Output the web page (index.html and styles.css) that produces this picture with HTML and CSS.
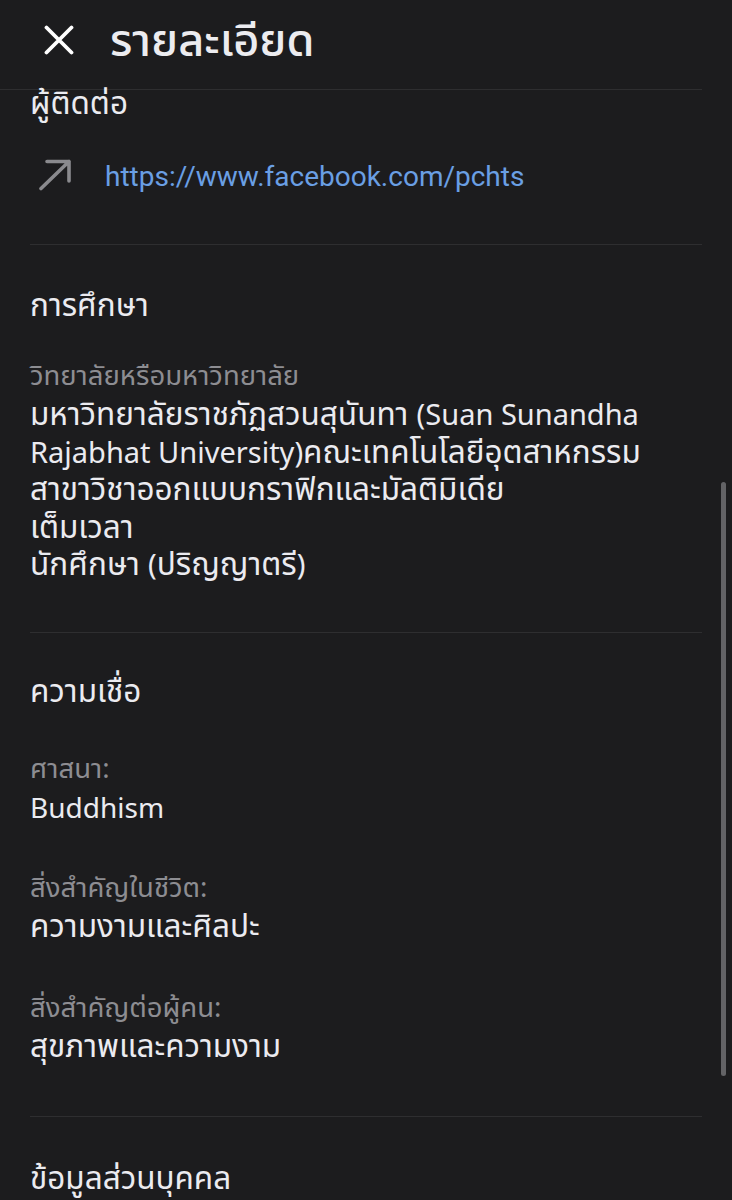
FILE: index.html
```html
<!DOCTYPE html>
<html lang="th">
<head>
<meta charset="utf-8">
<link rel="stylesheet" href="styles.css">
</head>
<body>
<div class="screen">
  <header class="topbar">
    <svg class="close" viewBox="0 0 30 30" width="30" height="30"><path d="M2.5 2.5 L27.5 27.5 M27.5 2.5 L2.5 27.5" stroke="#ffffff" stroke-width="3.8" stroke-linecap="round" fill="none"/></svg>
    <h1 class="title">รายละเอียด</h1>
  </header>
  <main class="content">
    <section class="sec sec-contact">
      <h2 class="sec-title">ผู้ติดต่อ</h2>
      <div class="link-row">
        <svg class="arrow" viewBox="0 0 34 32" width="34" height="32"><path d="M3 29.5 L31 2.5 M9 2.5 L31 2.5 L31 22" stroke="#8a8a8e" stroke-width="3.6" stroke-linecap="round" stroke-linejoin="round" fill="none"/></svg>
        <span class="link">https://www.facebook.com/pchts</span>
      </div>
    </section>
    <section class="sec sec-edu">
      <h2 class="sec-title">การศึกษา</h2>
      <div class="field field-first">
        <div class="label">วิทยาลัยหรือมหาวิทยาลัย</div>
        <div class="value">มหาวิทยาลัยราชภัฏสวนสุนันทา <span class="latin">(Suan Sunandha</span><br><span class="latin">Rajabhat University)</span>คณะเทคโนโลยีอุตสาหกรรม<br>สาขาวิชาออกแบบกราฟิกและมัลติมิเดีย<br>เต็มเวลา<br>นักศึกษา <span class="latin">(</span>ปริญญาตรี<span class="latin">)</span></div>
      </div>
    </section>
    <section class="sec sec-belief">
      <h2 class="sec-title">ความเชื่อ</h2>
      <div class="field field-first">
        <div class="label">ศาสนา:</div>
        <div class="value"><span class="latin latin-word">Buddhism</span></div>
      </div>
      <div class="field">
        <div class="label">สิ่งสำคัญในชีวิต:</div>
        <div class="value">ความงามและศิลปะ</div>
      </div>
      <div class="field">
        <div class="label">สิ่งสำคัญต่อผู้คน:</div>
        <div class="value">สุขภาพและความงาม</div>
      </div>
    </section>
    <section class="sec sec-last">
      <h2 class="sec-title">ข้อมูลส่วนบุคคล</h2>
    </section>
  </main>
  <div class="scrollbar"></div>
</div>
</body>
</html>
```
FILE: styles.css
```css
html, body {
  margin: 0;
  padding: 0;
  background: #1c1c1e;
}
body {
  font-family: "Noto Sans Thai", "Noto Sans", Roboto, sans-serif;
  color: #ebebf0;
  width: 732px;
  height: 1200px;
  overflow: hidden;
}
.screen {
  position: relative;
  width: 732px;
  height: 1200px;
}
.latin {
  font-family: "Noto Sans", Roboto, sans-serif;
  font-size: 29px;
  line-height: 1;
}
.latin-word {
  font-size: 28px;
}
.topbar {
  display: flex;
  align-items: center;
  height: 90px;
  padding: 0 0 10px 44px;
  box-sizing: border-box;
  margin: 0 30px 0 0;
  border-bottom: 1px solid #2e2e30;
}
.close {
  flex: none;
}
.title {
  margin: 4px 0 0 36px;
  font-size: 45px;
  line-height: 50px;
  font-weight: 500;
  color: #ececf0;
}
.content {
  padding: 0 30px;
}
.sec {
  border-bottom: 1px solid #2e2e30;
  padding: 45px 0 50px;
}
.sec-contact {
  padding: 0 0 49px;
}
.sec-edu {
  padding: 47px 0 47px;
}
.sec-last {
  border-bottom: none;
  padding-top: 48px;
}
.sec-title {
  margin: 0;
  font-size: 31.5px;
  font-weight: 400;
  line-height: 30px;
  color: #ebebf0;
}
.link-row {
  display: flex;
  align-items: center;
  height: 40px;
  margin-top: 35px;
  padding-left: 8px;
}
.arrow { flex: none; }
.link {
  margin-left: 33px;
  margin-top: 2px;
  font-family: Roboto, "Noto Sans", sans-serif;
  font-size: 28px;
  color: #6a9fe4;
}
.field {
  margin-top: 46px;
}
.sec-edu .field-first {
  margin-top: 39px;
}
.label {
  font-size: 27.5px;
  line-height: 32px;
  color: #8d8d92;
}
.value {
  margin-top: 4px;
  font-size: 31.5px;
  line-height: 37.5px;
  color: #ebebf0;
}
.scrollbar {
  position: absolute;
  right: 6px;
  top: 482px;
  width: 5px;
  height: 594px;
  border-radius: 3px;
  background: #636366;
}
```
